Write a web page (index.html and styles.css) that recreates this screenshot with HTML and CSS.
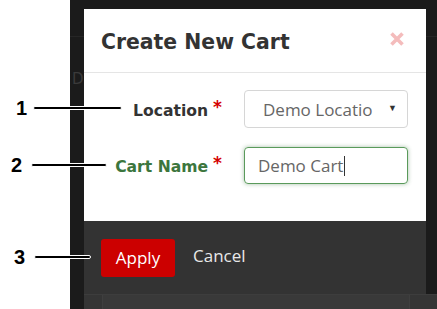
FILE: index.html
```html
<!DOCTYPE html>
<html>
<head>
<meta charset="utf-8">
<link rel="stylesheet" href="styles.css">
</head>
<body>
<div class="page">
  <div class="gutter"></div>
  <div class="backdrop">
    <span class="ghost ghost-d">D</span>
    <div class="modal">
      <div class="modal-header">
        <h1 class="title">Create New Cart</h1>
        <svg class="close" width="16" height="16" viewBox="0 0 16 16"><path d="M2.5 2.5 L13.5 13.5 M13.5 2.5 L2.5 13.5" stroke="#f4bcbc" stroke-width="3.6" stroke-linecap="butt"/></svg>
      </div>
      <div class="modal-body">
        <label class="label">Location<span class="req">*</span></label>
        <div class="select"><span>Demo Locatio</span><span class="arrow">▼</span></div>
        <label class="label ok">Cart Name<span class="req">*</span></label>
        <div class="input"><span>Demo Cart</span><span class="caret"></span></div>
      </div>
      <div class="modal-footer">
        <button class="btn-apply">Apply</button>
        <span class="btn-cancel">Cancel</span>
      </div>
    </div>
    <div class="below"><div class="below-inner"></div></div>
  </div>
</div>

<div class="anno anno-1"><span class="num">1</span><span class="line"></span></div>
<div class="anno anno-2"><span class="num">2</span><span class="line"></span></div>
<div class="anno anno-3"><span class="num">3</span><span class="line"></span></div>
</body>
</html>
```

FILE: styles.css
```css
html, body {
  margin: 0;
  padding: 0;
}
body {
  width: 437px;
  height: 309px;
  overflow: hidden;
  background: #fff;
  position: relative;
  font-family: "Open Sans", sans-serif;
}
.page {
  display: flex;
  height: 309px;
}
.gutter {
  width: 70px;
  flex: none;
  background: #fff;
}
.backdrop {
  flex: 1;
  position: relative;
  background: linear-gradient(#1b1b1b 0 36px, #262626 36px 37px, #1b1b1b 37px);
  padding: 9px 11px 0 14px;
  display: flex;
  flex-direction: column;
}
.ghost {
  position: absolute;
  font-family: "DejaVu Sans", sans-serif;
  font-size: 15px;
  color: #3a3a3a;
}
.ghost-d { left: 2px; top: 70px; }
.modal {
  position: relative;
  width: 342px;
  background: #fff;
  display: flex;
  flex-direction: column;
}
.modal-header {
  height: 63px;
  border-bottom: 1px solid #e5e5e5;
  display: flex;
  align-items: center;
  justify-content: space-between;
  padding: 0 21px 0 17px;
}
.title {
  margin: 0;
  font-family: "DejaVu Sans", sans-serif;
  font-weight: bold;
  font-size: 20.4px;
  color: #333;
  padding-top: 2px;
}
.close {
  display: block;
  margin-top: -4px;
}
.modal-body {
  display: grid;
  grid-template-columns: 1fr 164px;
  column-gap: 22px;
  row-gap: 19px;
  align-items: center;
  padding: 17px 18px 37px 0;
}
.label {
  justify-self: end;
  font-family: "DejaVu Sans", sans-serif;
  font-weight: bold;
  font-size: 15.6px;
  color: #333;
  padding-bottom: 2px;
}
.label.ok {
  color: #3c763d;
}
.req {
  color: #d40000;
  margin-left: 5px;
  font-size: 17px;
  vertical-align: 3px;
}
.select {
  height: 38px;
  box-sizing: border-box;
  border: 1px solid #d6d6d6;
  border-radius: 4px;
  display: flex;
  align-items: center;
  justify-content: space-between;
  padding: 0 10px 0 18px;
  font-size: 17px;
  color: #666;
}
.arrow {
  font-size: 9px;
  color: #333;
  margin-top: -4px;
}
.input {
  height: 37px;
  box-sizing: border-box;
  border: 1px solid #5a9a5b;
  border-radius: 4px;
  box-shadow: 0 0 4px rgba(60, 118, 61, 0.45);
  display: flex;
  align-items: center;
  padding: 0 0 0 13px;
  font-size: 17px;
  color: #666;
}
.caret {
  width: 1px;
  height: 20px;
  background: #333;
  margin-left: 1px;
}
.modal-footer {
  height: 73px;
  background: #333;
  display: flex;
  align-items: center;
  gap: 18px;
  padding: 0 17px;
}
.btn-apply {
  width: 74px;
  height: 38px;
  border: none;
  border-radius: 3px;
  background: #cc0000;
  color: #fff;
  font-family: "Open Sans", sans-serif;
  font-size: 17px;
  padding: 0;
}
.btn-cancel {
  color: #e8e8e8;
  font-size: 17px;
  padding-bottom: 4px;
}
.below {
  width: 342px;
  flex: 1;
  background: #353535;
  border-top: 1px solid #3d3d3d;
  padding-left: 18px;
  display: flex;
}
.below-inner {
  width: 306px;
  border-left: 1px solid #3f3f3f;
  border-right: 1px solid #3f3f3f;
  background: #393939;
}
.anno {
  position: absolute;
  display: flex;
  align-items: center;
  height: 20px;
}
.num {
  font-family: "Liberation Sans", Arial, sans-serif;
  font-weight: bold;
  font-size: 20px;
  color: #000;
  line-height: 20px;
}
.line {
  display: block;
  height: 2px;
  background: #000;
  border: 1px solid #fff;
  border-radius: 2px;
}
.anno-1 { left: 16px; top: 98px; }
.anno-1 .line { width: 87px; margin-left: 6px; }
.anno-2 { left: 11px; top: 155px; }
.anno-2 .line { width: 74px; margin-left: 9px; }
.anno-3 { left: 14px; top: 247px; }
.anno-3 .line { width: 55px; margin-left: 9px; }
```
